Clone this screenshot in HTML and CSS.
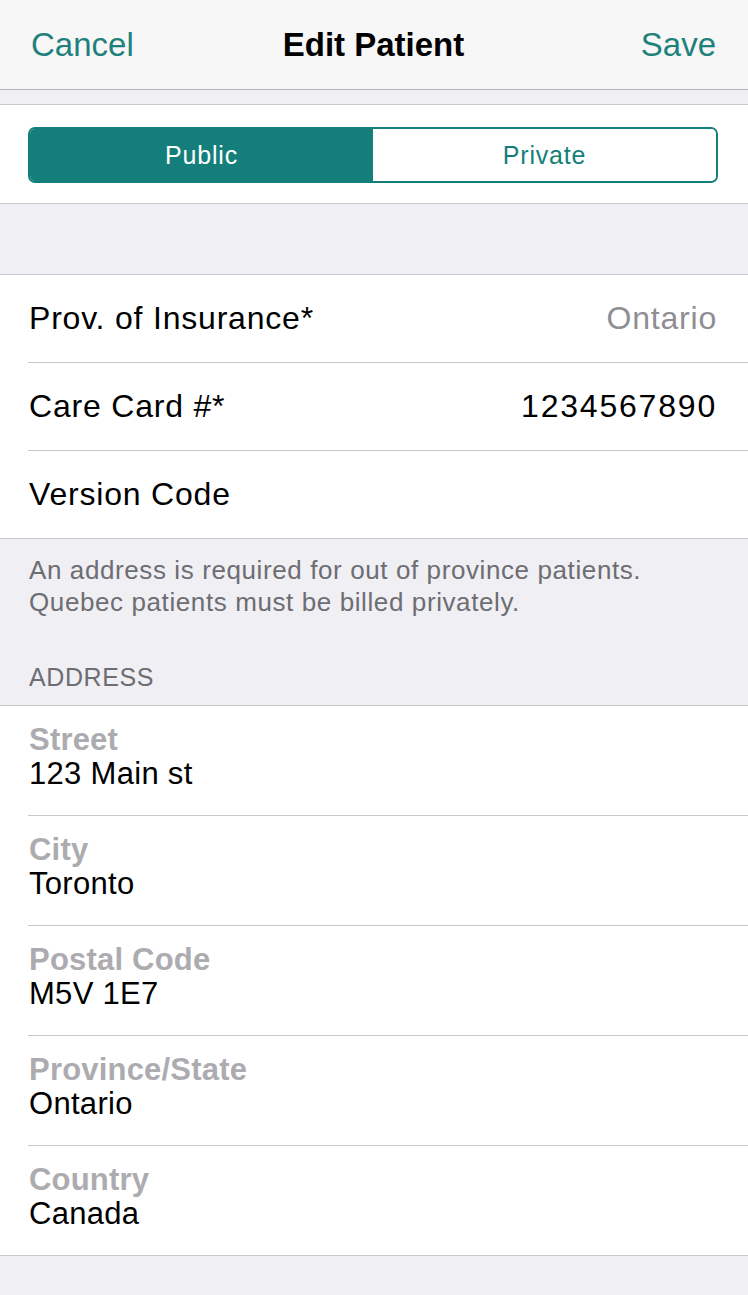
FILE: index.html
```html
<!DOCTYPE html>
<html lang="en">

<head>
    <meta charset="UTF-8">
    <meta name="viewport" content="width=device-width, initial-scale=1.0">
    <title>Edit Patient</title>
    <link rel="stylesheet" href="styles.css">
</head>

<body>
    <header class="navbar">
        <span class="nav-btn">Cancel</span>
        <h1 class="nav-title">Edit Patient</h1>
        <span class="nav-btn nav-right">Save</span>
    </header>

    <div class="gap-small"></div>

    <section class="group seg-group">
        <div class="segmented">
            <div class="seg active">Public</div>
            <div class="seg">Private</div>
        </div>
    </section>

    <div class="gap-large"></div>

    <section class="group">
        <div class="row">
            <div class="row-inner">
                <span class="row-label">Prov. of Insurance*</span>
                <span class="row-value muted">Ontario</span>
            </div>
        </div>
        <div class="row">
            <div class="row-inner">
                <span class="row-label">Care Card #*</span>
                <span class="row-value digits">1234567890</span>
            </div>
        </div>
        <div class="row">
            <div class="row-inner last">
                <span class="row-label">Version Code</span>
            </div>
        </div>
    </section>

    <p class="group-footer">An address is required for out of province patients.<br>Quebec patients must be billed privately.</p>

    <h2 class="group-header">ADDRESS</h2>

    <section class="group">
        <div class="field">
            <div class="field-inner">
                <div class="field-label">Street</div>
                <div class="field-value">123 Main st</div>
            </div>
        </div>
        <div class="field">
            <div class="field-inner">
                <div class="field-label">City</div>
                <div class="field-value">Toronto</div>
            </div>
        </div>
        <div class="field">
            <div class="field-inner">
                <div class="field-label">Postal Code</div>
                <div class="field-value">M5V 1E7</div>
            </div>
        </div>
        <div class="field">
            <div class="field-inner">
                <div class="field-label">Province/State</div>
                <div class="field-value">Ontario</div>
            </div>
        </div>
        <div class="field">
            <div class="field-inner last">
                <div class="field-label">Country</div>
                <div class="field-value">Canada</div>
            </div>
        </div>
    </section>
</body>

</html>
```

FILE: styles.css
```css
body {
    font-family: "Liberation Sans", Arial, sans-serif;
    margin: 0;
    padding: 0;
    background-color: #efeff4;
    color: #000;
    min-height: 1295px;
}

.navbar {
    height: 89px;
    background-color: #f7f7f8;
    border-bottom: 1px solid #b4b4b8;
    display: grid;
    grid-template-columns: 1fr auto 1fr;
    align-items: center;
    padding: 0 32px 0 31px;
}

.nav-btn {
    font-size: 33px;
    color: #1f817b;
}

.nav-right {
    text-align: right;
}

.nav-title {
    margin: 0;
    font-size: 33px;
    font-weight: bold;
}

.gap-small {
    height: 14px;
}

.gap-large {
    height: 70px;
}

.group {
    background-color: #fff;
    border-top: 1px solid #c8c7cc;
    border-bottom: 1px solid #c8c7cc;
}

.seg-group {
    padding: 22px 30px 20px 28px;
}

.segmented {
    display: flex;
    height: 52px;
    border: 2px solid #147f7a;
    border-radius: 7px;
    overflow: hidden;
}

.seg {
    flex: 1;
    display: flex;
    align-items: center;
    justify-content: center;
    font-size: 25px;
    letter-spacing: 0.8px;
    color: #147f7a;
    background-color: #fff;
}

.seg.active {
    background-color: #147f7a;
    color: #fff;
}

.row {
    padding-left: 28px;
}

.row-inner {
    height: 87px;
    display: flex;
    align-items: center;
    justify-content: space-between;
    padding-right: 31px;
    border-bottom: 1px solid #c8c7cc;
    font-size: 32px;
    letter-spacing: 0.8px;
}

.row-inner.last,
.field-inner.last {
    border-bottom: none;
}

.row-label {
    padding-left: 1px;
}

.muted {
    color: #8e8e93;
}

.digits {
    letter-spacing: 1.8px;
}

.group-footer {
    margin: 0;
    padding: 15px 29px 0;
    font-size: 26px;
    line-height: 32px;
    letter-spacing: 0.6px;
    color: #6d6d72;
}

.group-header {
    margin: 0;
    padding: 44px 29px 13px;
    font-size: 25px;
    line-height: 30px;
    font-weight: normal;
    letter-spacing: 0.6px;
    color: #6d6d72;
}

.field {
    padding-left: 28px;
}

.field-inner {
    padding: 17px 31px 24px 1px;
    border-bottom: 1px solid #c8c7cc;
}

.field-label {
    font-size: 31px;
    line-height: 34px;
    font-weight: bold;
    letter-spacing: 0.2px;
    color: #acacb0;
}

.field-value {
    font-size: 31px;
    line-height: 34px;
    letter-spacing: 0.3px;
}
```
